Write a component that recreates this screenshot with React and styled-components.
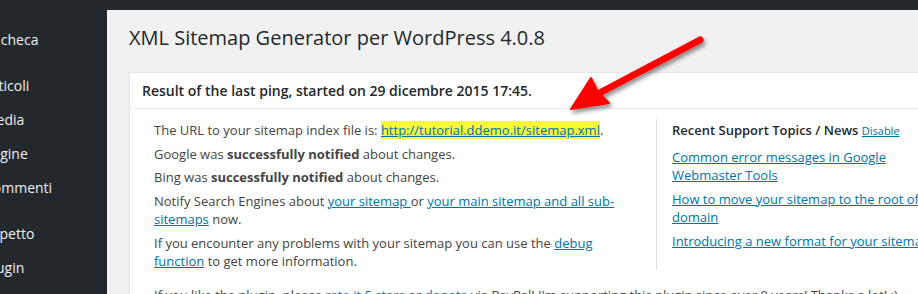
import styled, { createGlobalStyle } from "styled-components";

const GlobalStyle = createGlobalStyle`
  html, body {
    margin: 0;
    padding: 0;
    background: #f1f1f1;
    font-family: "Open Sans", "Noto Sans", sans-serif;
    overflow: hidden;
  }
`;

const Page = styled.div`
  position: relative;
  width: 918px;
  height: 294px;
  overflow: hidden;
  background: #f1f1f1;
`;

const AdminBar = styled.div`
  height: 10px;
  background: #23282d;
`;

const Layout = styled.div`
  display: flex;
  height: 284px;
`;

const Sidebar = styled.nav`
  width: 107px;
  flex-shrink: 0;
  background: #23282d;
  overflow: hidden;
  padding-top: 18px;
`;

const MenuItem = styled.div`
  margin-left: -16px;
  height: 34px;
  line-height: 24px;
  font-size: 14px;
  color: #eeeeee;
  white-space: nowrap;
  margin-bottom: ${(p) => (p.$separated ? "12px" : "0")};
`;

const Main = styled.main`
  flex: 1;
  min-width: 0;
  padding: 0 0 0 22px;
  overflow: hidden;
`;

const Title = styled.h2`
  margin: 14px 0 0;
  font-size: 20px;
  line-height: 28px;
  font-weight: 400;
  color: #23282d;
`;

const Box = styled.section`
  margin-top: 20px;
  width: 820px;
  background: #fff;
  border: 1px solid #e5e5e5;
  box-shadow: 0 1px 1px rgba(0, 0, 0, 0.04);
`;

const BoxHeader = styled.h3`
  margin: 0;
  padding: 8px 12px;
  font-size: 14px;
  line-height: 19px;
  font-weight: 600;
  color: #23282d;
  border-bottom: 1px solid #eeeeee;
`;

const BoxBody = styled.div`
  padding: 12px 24px 0;
  font-size: 13px;
  line-height: 18.5px;
  color: #444;
`;

const Columns = styled.div`
  display: flex;
  align-items: flex-start;
`;

const LeftCol = styled.div`
  width: 476px;
  flex-shrink: 0;
`;

const Para = styled.p`
  margin: 0 0 5px;
`;

const RightCol = styled.aside`
  margin-left: 26px;
  margin-top: -2px;
  padding: 2px 0 14px 15px;
  border-left: 1px solid #dddddd;
  flex: 1;
`;

const SideHeading = styled.div`
  font-weight: 600;
  color: #23282d;
  margin-bottom: 7px;
`;

const SmallLink = styled.a`
  font-size: 11px;
  font-weight: 400;
  color: #0073aa;
  text-decoration: underline;
`;

const Link = styled.a`
  color: #0073aa;
  text-decoration: underline;
  background: ${(p) => (p.$highlight ? "#f8f83a" : "transparent")};
`;

const TopicList = styled.ul`
  list-style: none;
  margin: 0;
  padding: 0;
`;

const Topic = styled.li`
  margin: 0 0 5px;
  width: 283px;
`;

const Footer = styled.p`
  margin: 10px 0 0;
  white-space: nowrap;
`;

const Arrow = styled.svg`
  position: absolute;
  left: 0;
  top: 0;
  pointer-events: none;
`;

export default function App() {
  return (
    <>
      <GlobalStyle />
      <Page>
        <AdminBar />
        <Layout>
          <Sidebar>
            <MenuItem $separated>Bacheca</MenuItem>
            <MenuItem>Articoli</MenuItem>
            <MenuItem>Media</MenuItem>
            <MenuItem>Pagine</MenuItem>
            <MenuItem $separated>Commenti</MenuItem>
            <MenuItem>Aspetto</MenuItem>
            <MenuItem>Plugin</MenuItem>
            <MenuItem>Utenti</MenuItem>
          </Sidebar>
          <Main>
            <Title>XML Sitemap Generator per WordPress 4.0.8</Title>
            <Box>
              <BoxHeader>
                Result of the last ping, started on 29 dicembre 2015 17:45.
              </BoxHeader>
              <BoxBody>
                <Columns>
                  <LeftCol>
                    <Para>
                      The URL to your sitemap index file is:{" "}
                      <Link $highlight href="#">
                        http://tutorial.ddemo.it/sitemap.xml
                      </Link>
                      .
                    </Para>
                    <Para>
                      Google was <b>successfully notified</b> about changes.
                    </Para>
                    <Para>
                      Bing was <b>successfully notified</b> about changes.
                    </Para>
                    <Para>
                      Notify Search Engines about <Link href="#">your sitemap </Link>
                      or <Link href="#">your main sitemap and all sub-sitemaps</Link> now.
                    </Para>
                    <Para>
                      If you encounter any problems with your sitemap you can use the{" "}
                      <Link href="#">debug function</Link> to get more information.
                    </Para>
                  </LeftCol>
                  <RightCol>
                    <SideHeading>
                      Recent Support Topics / News <SmallLink href="#">Disable</SmallLink>
                    </SideHeading>
                    <TopicList>
                      <Topic>
                        <Link href="#">Common error messages in Google Webmaster Tools</Link>
                      </Topic>
                      <Topic>
                        <Link href="#">How to move your sitemap to the root of your domain</Link>
                      </Topic>
                      <Topic>
                        <Link href="#">Introducing a new format for your sitemap</Link>
                      </Topic>
                    </TopicList>
                  </RightCol>
                </Columns>
                <Footer>
                  If you like the plugin, please <Link href="#">rate it 5 stars</Link> or{" "}
                  <Link href="#">donate</Link> via PayPal! I'm supporting this plugin since
                  over 9 years! Thanks a lot! :)
                </Footer>
              </BoxBody>
            </Box>
          </Main>
        </Layout>
        <Arrow width="918" height="294" viewBox="0 0 918 294">
          <defs>
            <filter id="shadow" x="-20%" y="-20%" width="140%" height="140%">
              <feDropShadow dx="2" dy="3" stdDeviation="2" floodColor="#000" floodOpacity="0.45" />
            </filter>
          </defs>
          <g filter="url(#shadow)" fill="#ff0000" stroke="#ff0000" strokeLinejoin="round">
            <line x1="700" y1="40" x2="590" y2="98" strokeWidth="7" strokeLinecap="round" />
            <path d="M571 109 L591 78 L598 92 L609 103 Z" strokeWidth="2" />
          </g>
        </Arrow>
      </Page>
    </>
  );
}
